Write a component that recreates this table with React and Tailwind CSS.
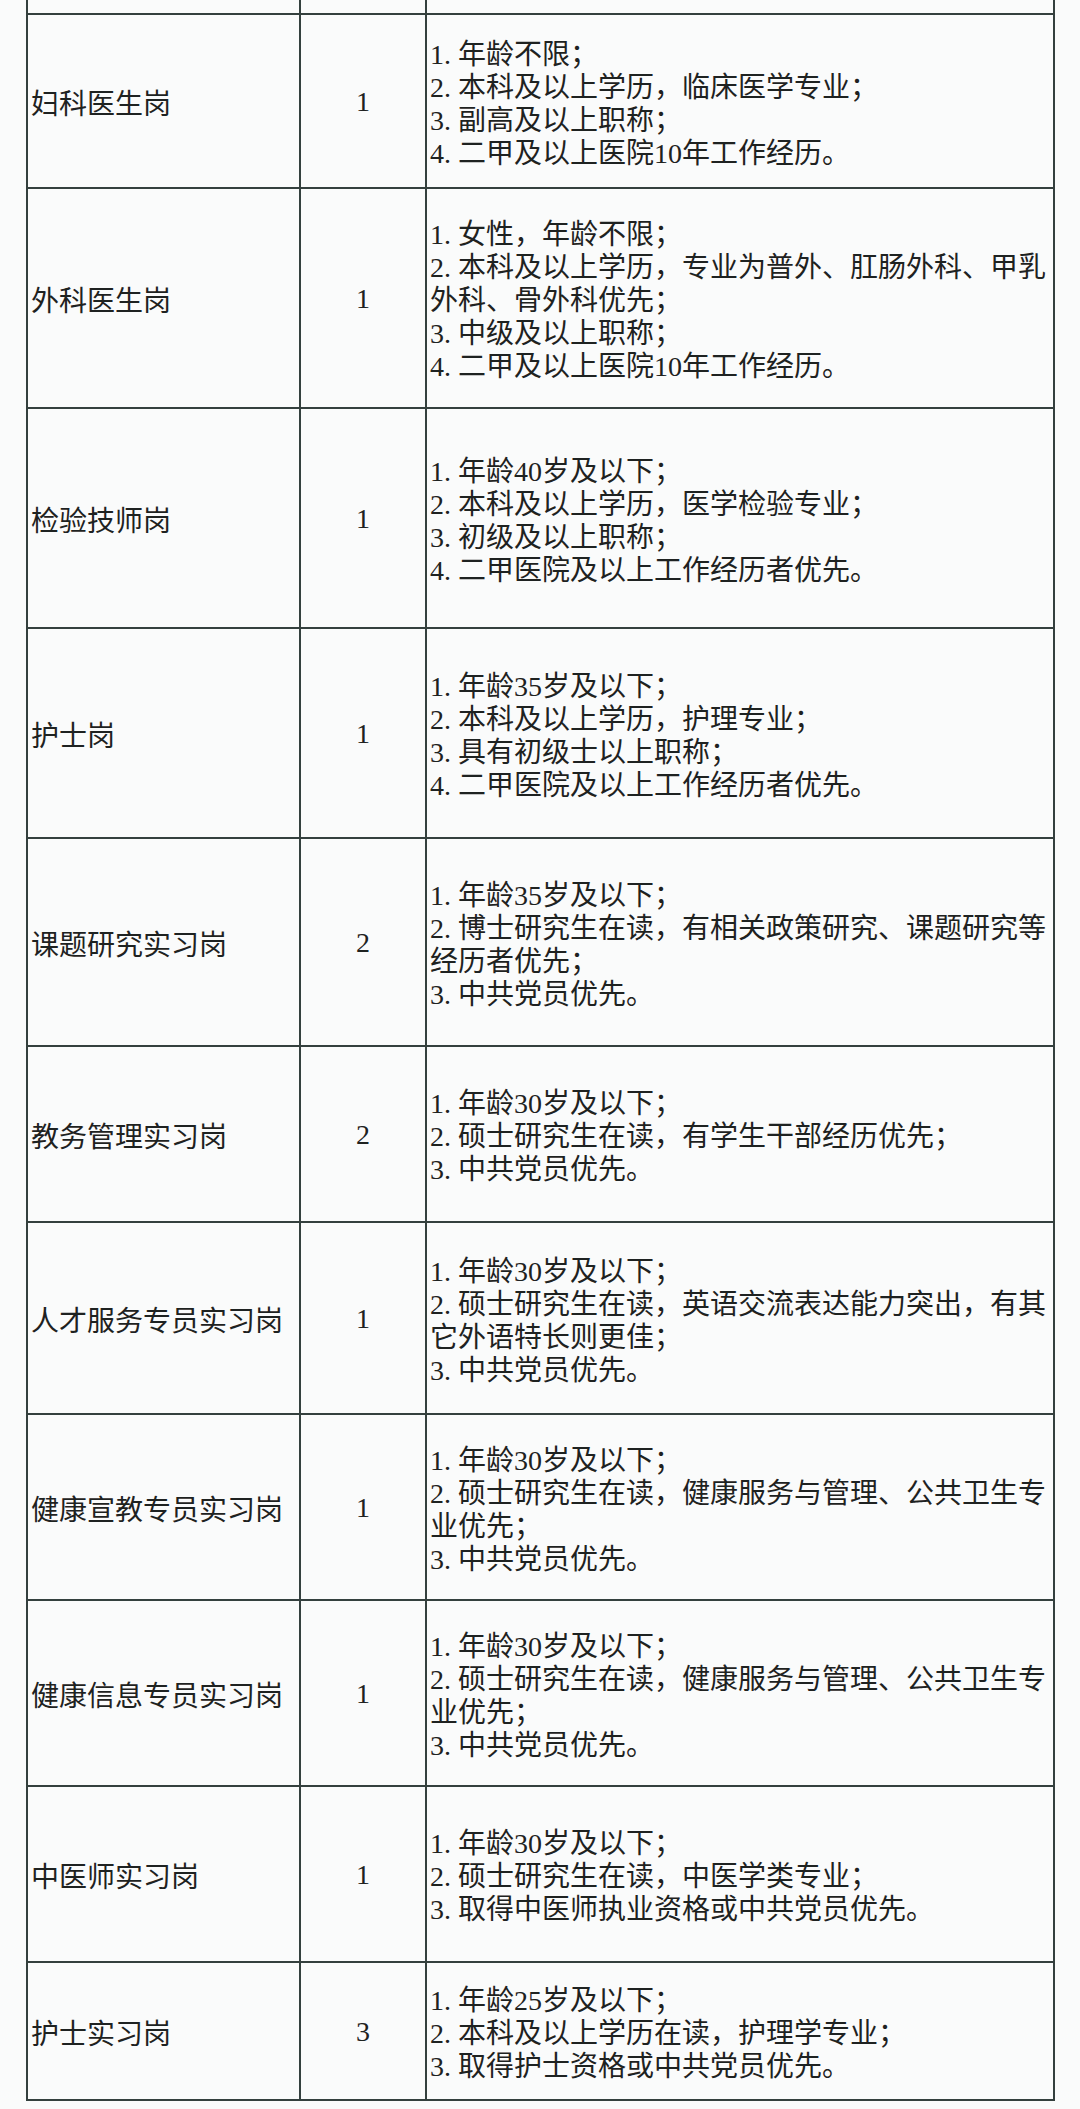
import React from 'react';

const rows = [
  { name: '妇科医生岗', n: '1', h: 'h-[174px]', lines: ['1.年龄不限；', '2.本科及以上学历，临床医学专业；', '3.副高及以上职称；', '4.二甲及以上医院10年工作经历。'] },
  { name: '外科医生岗', n: '1', h: 'h-[220px]', lines: ['1.女性，年龄不限；', '2.本科及以上学历，专业为普外、肛肠外科、甲乳', '外科、骨外科优先；', '3.中级及以上职称；', '4.二甲及以上医院10年工作经历。'] },
  { name: '检验技师岗', n: '1', h: 'h-[220px]', lines: ['1.年龄40岁及以下；', '2.本科及以上学历，医学检验专业；', '3.初级及以上职称；', '4.二甲医院及以上工作经历者优先。'] },
  { name: '护士岗', n: '1', h: 'h-[210px]', lines: ['1.年龄35岁及以下；', '2.本科及以上学历，护理专业；', '3.具有初级士以上职称；', '4.二甲医院及以上工作经历者优先。'] },
  { name: '课题研究实习岗', n: '2', h: 'h-[208px]', lines: ['1.年龄35岁及以下；', '2.博士研究生在读，有相关政策研究、课题研究等', '经历者优先；', '3.中共党员优先。'] },
  { name: '教务管理实习岗', n: '2', h: 'h-[176px]', lines: ['1.年龄30岁及以下；', '2.硕士研究生在读，有学生干部经历优先；', '3.中共党员优先。'] },
  { name: '人才服务专员实习岗', n: '1', h: 'h-[192px]', lines: ['1.年龄30岁及以下；', '2.硕士研究生在读，英语交流表达能力突出，有其', '它外语特长则更佳；', '3.中共党员优先。'] },
  { name: '健康宣教专员实习岗', n: '1', h: 'h-[186px]', lines: ['1.年龄30岁及以下；', '2.硕士研究生在读，健康服务与管理、公共卫生专', '业优先；', '3.中共党员优先。'] },
  { name: '健康信息专员实习岗', n: '1', h: 'h-[186px]', lines: ['1.年龄30岁及以下；', '2.硕士研究生在读，健康服务与管理、公共卫生专', '业优先；', '3.中共党员优先。'] },
  { name: '中医师实习岗', n: '1', h: 'h-[176px]', lines: ['1.年龄30岁及以下；', '2.硕士研究生在读，中医学类专业；', '3.取得中医师执业资格或中共党员优先。'] },
  { name: '护士实习岗', n: '3', h: 'h-[138px]', lines: ['1.年龄25岁及以下；', '2.本科及以上学历在读，护理学专业；', '3.取得护士资格或中共党员优先。'] },
];

// numbered lines keep "1." as a full-width slot, like the SimSun original
function Line({ text }) {
  const m = text.match(/^(\d\.)(.*)$/);
  if (!m) return <div className="whitespace-nowrap">{text}</div>;
  return (
    <div className="whitespace-nowrap">
      <span className="inline-block w-[28px]">{m[1]}</span>
      {m[2]}
    </div>
  );
}

export default function App() {
  return (
    <div
      className="min-h-[2109px] w-[1080px] bg-[#fafbfb] text-[#1e2221] text-[28px] leading-[33px]"
      style={{ fontFamily: '"Liberation Serif", "Noto Sans CJK SC", serif' }}
    >
      <div className="ml-[26px] w-[1029px] border-l-2 border-[#34403e]">
        {/* tail of the row above */}
        <div className="grid grid-cols-[273px_126px_628px] h-[15px] border-b-2 border-[#34403e]">
          <div className="border-r-2 border-[#34403e]" />
          <div className="border-r-2 border-[#34403e]" />
          <div className="border-r-2 border-[#34403e]" />
        </div>

        {rows.map((r) => (
          <div key={r.name} className={`grid grid-cols-[273px_126px_628px] border-b-2 border-[#34403e] ${r.h}`}>
            <div className="flex items-center pl-[3px] pt-[2px] border-r-2 border-[#34403e]" style={{ fontFamily: '"Noto Sans CJK SC", sans-serif' }}>
              {r.name}
            </div>
            <div className="flex items-center justify-center border-r-2 border-[#34403e]">{r.n}</div>
            <div className="flex flex-col justify-center pl-[3px] pt-[5px] border-r-2 border-[#34403e]">
              {r.lines.map((l, i) => (
                <Line key={i} text={l} />
              ))}
            </div>
          </div>
        ))}
      </div>
    </div>
  );
}
